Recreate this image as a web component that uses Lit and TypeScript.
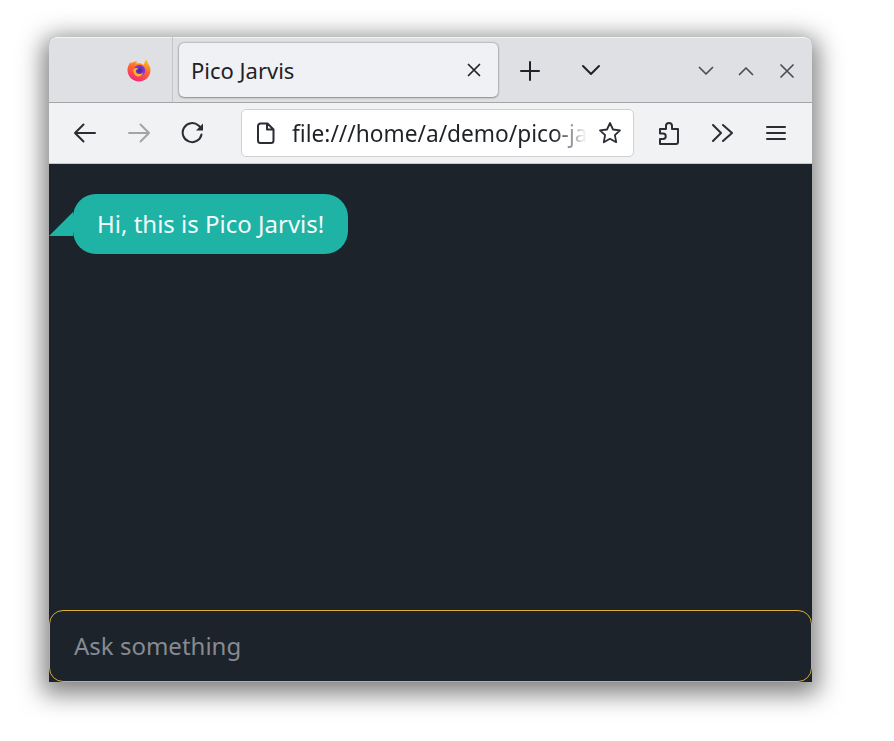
import { LitElement, html, css, svg } from "lit";
import { customElement } from "lit/decorators.js";

const icon = (w: number, h: number, body: unknown, cls = "") => html`<svg class="ic ${cls}" width=${w} height=${h} viewBox="0 0 ${w} ${h}" fill="none" stroke="currentColor" stroke-width="2" stroke-linecap="round" stroke-linejoin="round">${body}</svg>`;

@customElement("app-root")
export class AppRoot extends LitElement {
  static styles = css`
    :host { display: block; width: 894px; height: 741px; box-sizing: border-box; padding: 37px 82px 59px 49px; background: #fff; font-family: "Noto Sans", sans-serif; overflow: hidden; }
    .win { width: 763px; height: 645px; display: flex; flex-direction: column; border-radius: 8px 8px 0 0; box-shadow: 0 6px 24px 6px rgba(0,0,0,.5); background: #1c232b; }
    .ic { display: block; flex: none; }
    .tabs { height: 66px; box-sizing: border-box; display: flex; align-items: center; background: #dfe0e3; border-bottom: 1px solid #a4a5a7; border-radius: 8px 8px 0 0; box-shadow: inset 0 1px 0 #f4f4f5; color: #1f2227; }
    .pin { width: 124px; height: 65px; box-sizing: border-box; padding: 0 22px 0 78px; display: flex; align-items: center; border-right: 1px solid #c3c4c7; }
    .tab { width: 319px; height: 54px; margin: 1px 0 0 6px; box-sizing: border-box; padding: 0 17px 0 12px; display: flex; align-items: center; justify-content: space-between; border-radius: 5px; background: #f0f1f4; box-shadow: 0 0 2px rgba(0,0,0,.5), 0 1px 2px rgba(0,0,0,.25); font-size: 22px; color: #1f2227; }
    .new { margin: 3px 0 0 22px; }
    .all { margin-left: 41px; }
    .winctl { margin-left: auto; display: flex; align-items: center; gap: 24px; padding: 2px 18px 0 0; color: #4b4e53; }
    .winctl .last { margin-left: 2px; }
    .bar { height: 61px; box-sizing: border-box; display: flex; align-items: center; background: #f1f2f4; border-bottom: 1px solid #c6c7c9; color: #2a2d32; }
    .nav { display: flex; align-items: center; gap: 30px; margin-left: 24px; }
    .fwd { color: #a2a4a8; }
    .url { width: 393px; height: 48px; margin-left: 36px; box-sizing: border-box; padding: 0 11px 0 14px; display: flex; align-items: center; background: #fff; border: 1px solid #cfd0d3; border-radius: 5px; }
    .addr { width: 296px; margin-left: 16px; white-space: nowrap; font-size: 22.7px; color: #1f2227; -webkit-mask-image: linear-gradient(to right, #000 262px, transparent 295px); mask-image: linear-gradient(to right, #000 262px, transparent 295px); }
    .star { margin-left: auto; }
    .tools { display: flex; align-items: center; margin-left: 24px; gap: 32px; }
    .page { flex: 1; display: flex; flex-direction: column; justify-content: space-between; background: #1c232b; padding-top: 30px; min-height: 0; }
    .msg { display: flex; align-items: flex-end; height: 60px; }
    .tail { width: 0; height: 0; margin-bottom: 18px; border-left: 24px solid transparent; border-bottom: 24px solid #1fb3a6; }
    .bubble { height: 60px; box-sizing: border-box; padding: 0 24px 1px; display: flex; align-items: center; border-radius: 23px; background: #1fb3a6; color: #f2fbfa; font-size: 24px; }
    .ask { height: 72px; box-sizing: border-box; padding: 0 24px 2px; display: flex; align-items: center; border: 1px solid #dcae38; border-radius: 14px; font-size: 24px; color: #868b91; }
  `;

  render() {
    return html`<div class="win">
      <div class="tabs">
        <div class="pin">
          <svg class="ic" width="24" height="24" viewBox="0 0 24 24">
            <defs>
              <linearGradient id="fx" x1="0.75" y1="0" x2="0.35" y2="1"><stop offset="0" stop-color="#ffc21f"/><stop offset=".45" stop-color="#ff6a2b"/><stop offset="1" stop-color="#f2267a"/></linearGradient>
              <radialGradient id="fy" cx=".5" cy=".5" r=".5"><stop offset="0" stop-color="#3b2a9e"/><stop offset="1" stop-color="#9a38d4"/></radialGradient>
            </defs>
            <path fill="url(#fx)" d="M19 1.500c1.200 1.300 1.700 2.800 1.900 3.900 1.700 1.800 2.600 4.200 2.600 6.600 0 6.400-5.200 11.500-11.500 11.500S.5 18.400.5 12C.5 9.800 1.100 7.700 2.300 5.900l.7-2 .8 1.500C5.800 3.600 8 3.300 10.500 3.500 9.500 4.300 9 5 8.700 5.700c2.800-.9 6.100-.4 8 1.200.6-2 1.500-3.800 2.300-5.400z"/>
            <circle cx="12.500" cy="12.500" r="5.800" fill="url(#fy)"/>
            <path fill="#ffb31f" d="M6.500 11c2-1.500 4.300-1 5 .3-1.700-.3-2.700.6-2.700 1.800 0 1.700 1.700 3 3.700 3 1.700 0 3-.9 3.600-2.200-.2 3-2.400 4.600-4.900 4.500-3.200-.1-5.700-3.900-4.700-7.400z"/>
          </svg>
        </div>
        <div class="tab"><span>Pico Jarvis</span>
          ${icon(14, 14, svg`<path d="M1.500 1.500l11 11M12.500 1.500l-11 11" stroke-width="1.700"/>`)}
        </div>
        <div class="new">${icon(20, 20, svg`<path d="M10 1v18M1 10h18"/>`)}</div>
        <div class="all">${icon(20, 12, svg`<path d="M2 2l8 8 8-8"/>`)}</div>
        <div class="winctl">
          ${icon(16, 10, svg`<path d="M1.500 1.500L8 8l6.500-6.500" stroke-width="1.700"/>`)}
          ${icon(16, 10, svg`<path d="M1.500 8.500L8 2l6.500 6.500" stroke-width="1.700"/>`)}
          ${icon(14, 14, svg`<path d="M1 1l12 12M13 1L1 13" stroke-width="1.700"/>`, "last")}
        </div>
      </div>
      <div class="bar">
        <div class="nav">
          ${icon(24, 20, svg`<path d="M2 10h20M10.500 1.500L2 10l8.500 8.500"/>`)}
          ${icon(24, 20, svg`<path d="M2 10h20M13.500 1.500L22 10l-8.500 8.500"/>`, "fwd")}
          ${icon(24, 24, svg`<path d="M20.500 13.500A9.500 9.500 0 1 1 17.500 4.500L21 8"/><path d="M22 2.500v7h-7z" fill="currentColor" stroke="none"/>`)}
        </div>
        <div class="url">
          ${icon(20, 24, svg`<path d="M4.500 2.500h7l6 6v11a2.500 2.500 0 0 1-2.500 2.500H4.500A2.500 2.500 0 0 1 2 19.500v-14.500A2.500 2.500 0 0 1 4.500 2.500zM11 3V8.500h6"/>`)}
          <div class="addr">file:///home/a/demo/pico-ja</div>
          ${icon(24, 24, svg`<path d="M12 2l3 6.500 7 .9-5.100 4.800 1.300 7L12 17.800 5.800 21.200l1.300-7L2 9.400l7-.9z" stroke-width="1.800"/>`, "star")}
        </div>
        <div class="tools">
          ${icon(22, 24, svg`<path d="M2 8h6V5a3 3 0 0 1 6 0v3h6v13a2 2 0 0 1-2 2H2v-5h3a2.700 2.700 0 0 0 0-5.500H2z"/>`)}
          ${icon(22, 20, svg`<path d="M1 2l8 8-8 8M11 2l9 8-9 8"/>`)}
          ${icon(20, 16, svg`<path d="M1 2h18M1 8h18M1 14h18"/>`)}
        </div>
      </div>
      <div class="page">
        <div class="msg"><div class="tail"></div><div class="bubble">Hi, this is Pico Jarvis!</div></div>
        <div class="ask">Ask something</div>
      </div>
    </div>`;
  }
}
